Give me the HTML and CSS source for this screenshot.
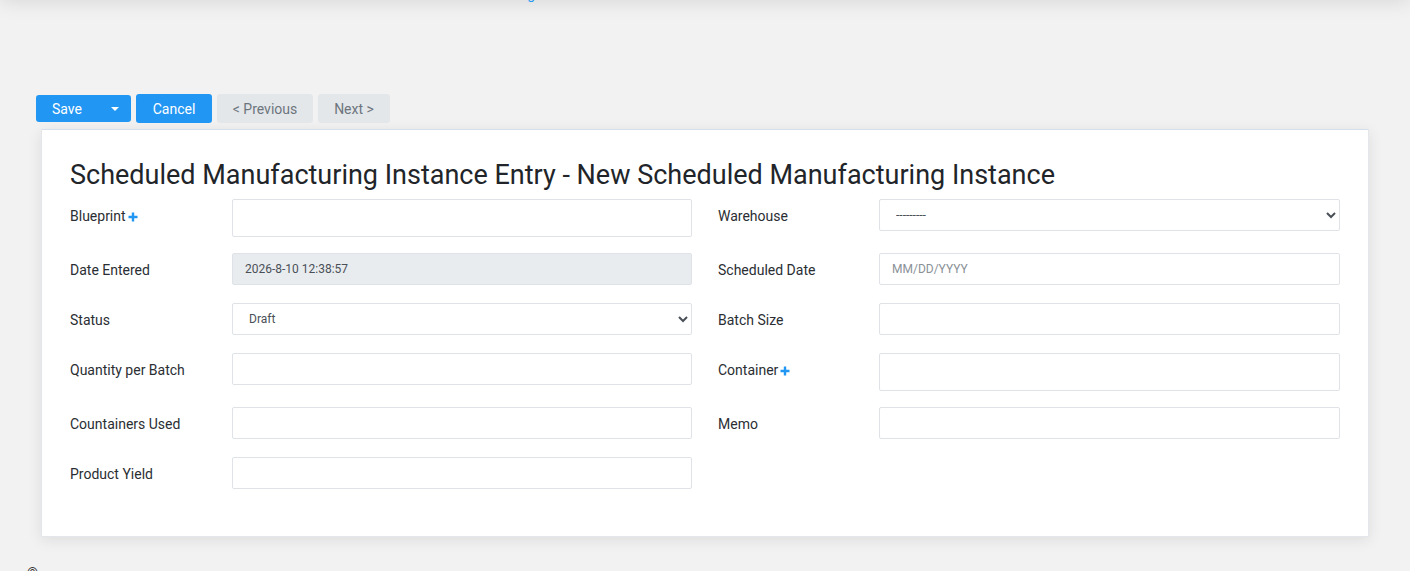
FILE: index.html
```html
<!DOCTYPE html>
<html lang="en">
<head>
<meta charset="utf-8">
<title>Scheduled Manufacturing Instance Entry</title>
<link rel="stylesheet" href="styles.css">
</head>
<body>
<nav class="topnav"><a class="navlink" href="#">Manufacturing</a></nav>
<main class="main">
  <div class="toolbar">
    <div class="btn-group">
      <button class="btn btn-primary btn-save">Save</button>
      <button class="btn btn-primary btn-caret"><span class="caret"></span></button>
    </div>
    <button class="btn btn-primary btn-tall btn-cancel">Cancel</button>
    <button class="btn btn-light btn-tall btn-prev">&lt; Previous</button>
    <button class="btn btn-light btn-tall btn-next">Next &gt;</button>
  </div>
  <section class="card">
    <h3 class="title">Scheduled Manufacturing Instance Entry - New Scheduled Manufacturing Instance</h3>
    <form class="form-grid">
      <label class="lbl">Blueprint<svg class="plus" width="10" height="10" viewBox="0 0 10 10"><path d="M5 0.5v9M0.5 5h9" stroke="#2196f3" stroke-width="2.4" fill="none"/></svg></label>
      <input class="ctl ctl-tall" type="text">
      <label class="lbl lbl-right">Warehouse</label>
      <select class="ctl ctl-select"><option>---------</option></select>

      <label class="lbl">Date Entered</label>
      <input class="ctl ctl-readonly" type="text" value="2026-8-10 12:38:57" readonly>
      <label class="lbl lbl-right">Scheduled Date</label>
      <input class="ctl" type="text" placeholder="MM/DD/YYYY">

      <label class="lbl">Status</label>
      <select class="ctl ctl-select"><option>Draft</option></select>
      <label class="lbl lbl-right">Batch Size</label>
      <input class="ctl" type="text">

      <label class="lbl">Quantity per Batch</label>
      <input class="ctl" type="text">
      <label class="lbl lbl-right">Container<svg class="plus" width="10" height="10" viewBox="0 0 10 10"><path d="M5 0.5v9M0.5 5h9" stroke="#2196f3" stroke-width="2.4" fill="none"/></svg></label>
      <input class="ctl ctl-tall" type="text">

      <label class="lbl">Countainers Used</label>
      <input class="ctl" type="text">
      <label class="lbl lbl-right">Memo</label>
      <input class="ctl" type="text">

      <label class="lbl">Product Yield</label>
      <input class="ctl" type="text">
    </form>
  </section>
</main>
<footer class="footer">©</footer>
</body>
</html>
```

FILE: styles.css
```css
* { box-sizing: border-box; }

html, body {
  margin: 0;
  padding: 0;
  background: #f2f2f2;
  font-family: Roboto, "Liberation Sans", Arial, sans-serif;
  color: #212529;
  overflow: hidden;
}

.topnav {
  height: 50px;
  margin-top: -50px;
  background: #ffffff;
  box-shadow: 0 0 22px rgba(0, 0, 0, 0.13);
  display: flex;
  align-items: flex-end;
  padding-left: 444px;
}

.navlink {
  color: #2196f3;
  text-decoration: none;
  font-size: 14px;
  line-height: 11px;
  height: 11px;
}

.main {
  padding: 94px 41px 0 41px;
}

.toolbar {
  display: flex;
  align-items: center;
  gap: 5px;
  margin-left: -5px;
  height: 29px;
}

.btn {
  font-family: Roboto, "Liberation Sans", Arial, sans-serif;
  font-size: 14px;
  border: none;
  border-radius: 3px;
  padding: 0;
  line-height: 20px;
  cursor: pointer;
  text-align: center;
}

.btn-primary {
  background: #2196f3;
  color: #ffffff;
}

.btn-light {
  background: #e4e7ea;
  color: #6c757d;
}

.btn-tall {
  height: 29px;
}

.btn-cancel { width: 76px; }
.btn-prev { width: 96px; }
.btn-next { width: 72px; }

.btn-group {
  display: flex;
  height: 27px;
}

.btn-save {
  height: 27px;
  width: 62px;
  padding: 0 0 0 16px;
  text-align: left;
  border-radius: 3px 0 0 3px;
}

.btn-caret {
  height: 27px;
  width: 33px;
  border-radius: 0 3px 3px 0;
  display: flex;
  align-items: center;
  justify-content: center;
}

.caret {
  width: 0;
  height: 0;
  border-left: 4px solid transparent;
  border-right: 4px solid transparent;
  border-top: 4px solid #ffffff;
}

.card {
  margin-top: 6px;
  background: #ffffff;
  border: 1px solid #e3e7ec;
  border-top-color: #d6e0ea;
  box-shadow: 0 3px 14px rgba(0, 0, 0, 0.09);
  padding: 28px 28px 45px 28px;
}

.title {
  margin: 0 0 7px 0;
  font-size: 27px;
  font-weight: 400;
  line-height: 34px;
  color: #212529;
}

.form-grid {
  display: grid;
  grid-template-columns: 162px 460px 187px 1fr;
  row-gap: 16px;
  align-items: start;
}

.lbl {
  font-size: 14px;
  line-height: 20px;
  padding: 7px 0;
  color: #2a2e33;
  display: flex;
  align-items: center;
}

.lbl-right {
  padding-left: 26px;
}

.plus {
  margin-left: 2px;
  margin-top: 1px;
}

.ctl {
  height: 32px;
  width: 100%;
  border: 1px solid #dfe3e7;
  border-radius: 2px;
  background: #ffffff;
  font-family: Roboto, "Liberation Sans", Arial, sans-serif;
  font-size: 12px;
  color: #495057;
  padding: 0 12px;
  margin: 0;
  outline: none;
}

.ctl::placeholder {
  color: #8a9197;
}

.ctl-tall {
  height: 38px;
}

.ctl-readonly {
  background: #e9ecef;
  color: #495057;
}

.ctl-select {
  color: #495057;
}

.footer {
  margin-top: 26px;
  padding-left: 27px;
  font-size: 14px;
  line-height: 20px;
  color: #333333;
}
```
